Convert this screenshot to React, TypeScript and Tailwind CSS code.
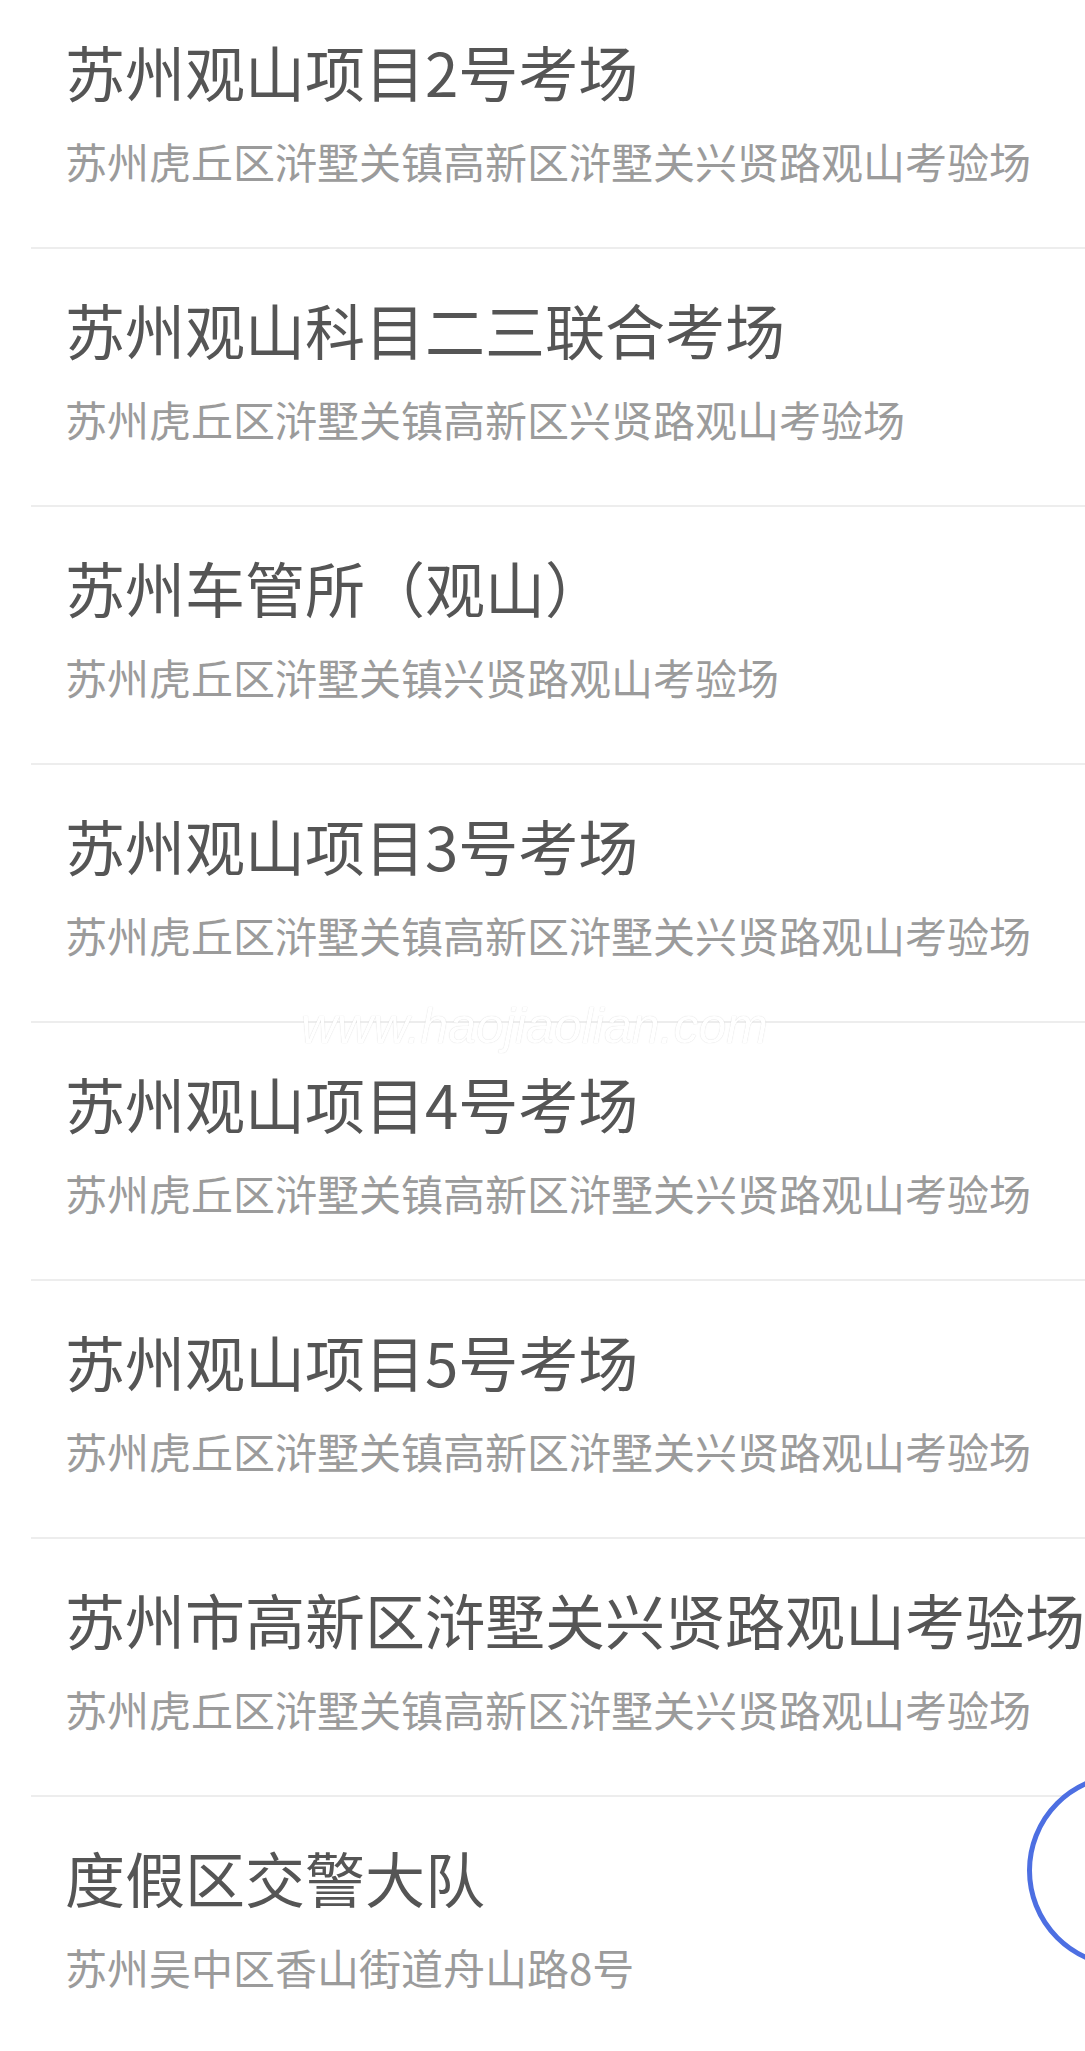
const sites = [
  { name: "苏州观山项目2号考场", addr: "苏州虎丘区浒墅关镇高新区浒墅关兴贤路观山考验场" },
  { name: "苏州观山科目二三联合考场", addr: "苏州虎丘区浒墅关镇高新区兴贤路观山考验场" },
  { name: "苏州车管所（观山）", addr: "苏州虎丘区浒墅关镇兴贤路观山考验场" },
  { name: "苏州观山项目3号考场", addr: "苏州虎丘区浒墅关镇高新区浒墅关兴贤路观山考验场" },
  { name: "苏州观山项目4号考场", addr: "苏州虎丘区浒墅关镇高新区浒墅关兴贤路观山考验场" },
  { name: "苏州观山项目5号考场", addr: "苏州虎丘区浒墅关镇高新区浒墅关兴贤路观山考验场" },
  { name: "苏州市高新区浒墅关兴贤路观山考验场", addr: "苏州虎丘区浒墅关镇高新区浒墅关兴贤路观山考验场" },
  { name: "度假区交警大队", addr: "苏州吴中区香山街道舟山路8号" },
];

function SiteRow({ name, addr }: { name: string; addr: string }) {
  return (
    <li className="border-b-2 border-[#ededed] pl-[34px] pt-[44px] pb-[61px]">
      <div className="whitespace-nowrap text-[60px] leading-[72px] text-[#555555]">{name}</div>
      <div className="mt-[29px] whitespace-nowrap text-[42px] leading-[50px] text-[#9b9b9b]">{addr}</div>
    </li>
  );
}

export default function App() {
  return (
    <div
      className="relative h-[2051px] w-full overflow-hidden bg-white"
      style={{ fontFamily: '"Noto Sans CJK SC", "Noto Sans", sans-serif' }}
    >
      <ul className="-mt-[9px] ml-[31px]">
        {sites.map((s, i) => (
          <SiteRow key={i} name={s.name} addr={s.addr} />
        ))}
      </ul>

      {/* watermark */}
      <div className="pointer-events-none absolute left-[301px] top-[998px] text-[50px] leading-[56px] italic text-white [font-family:'Liberation_Sans',sans-serif] [text-shadow:0_0_1px_rgba(0,0,0,0.2)]">
        www.haojiaolian.com
      </div>

      {/* floating button */}
      <div className="absolute left-[1027px] top-[1773px] h-[195px] w-[195px] rounded-full border-[5px] border-[#4d6fe2] bg-white" />
    </div>
  );
}
